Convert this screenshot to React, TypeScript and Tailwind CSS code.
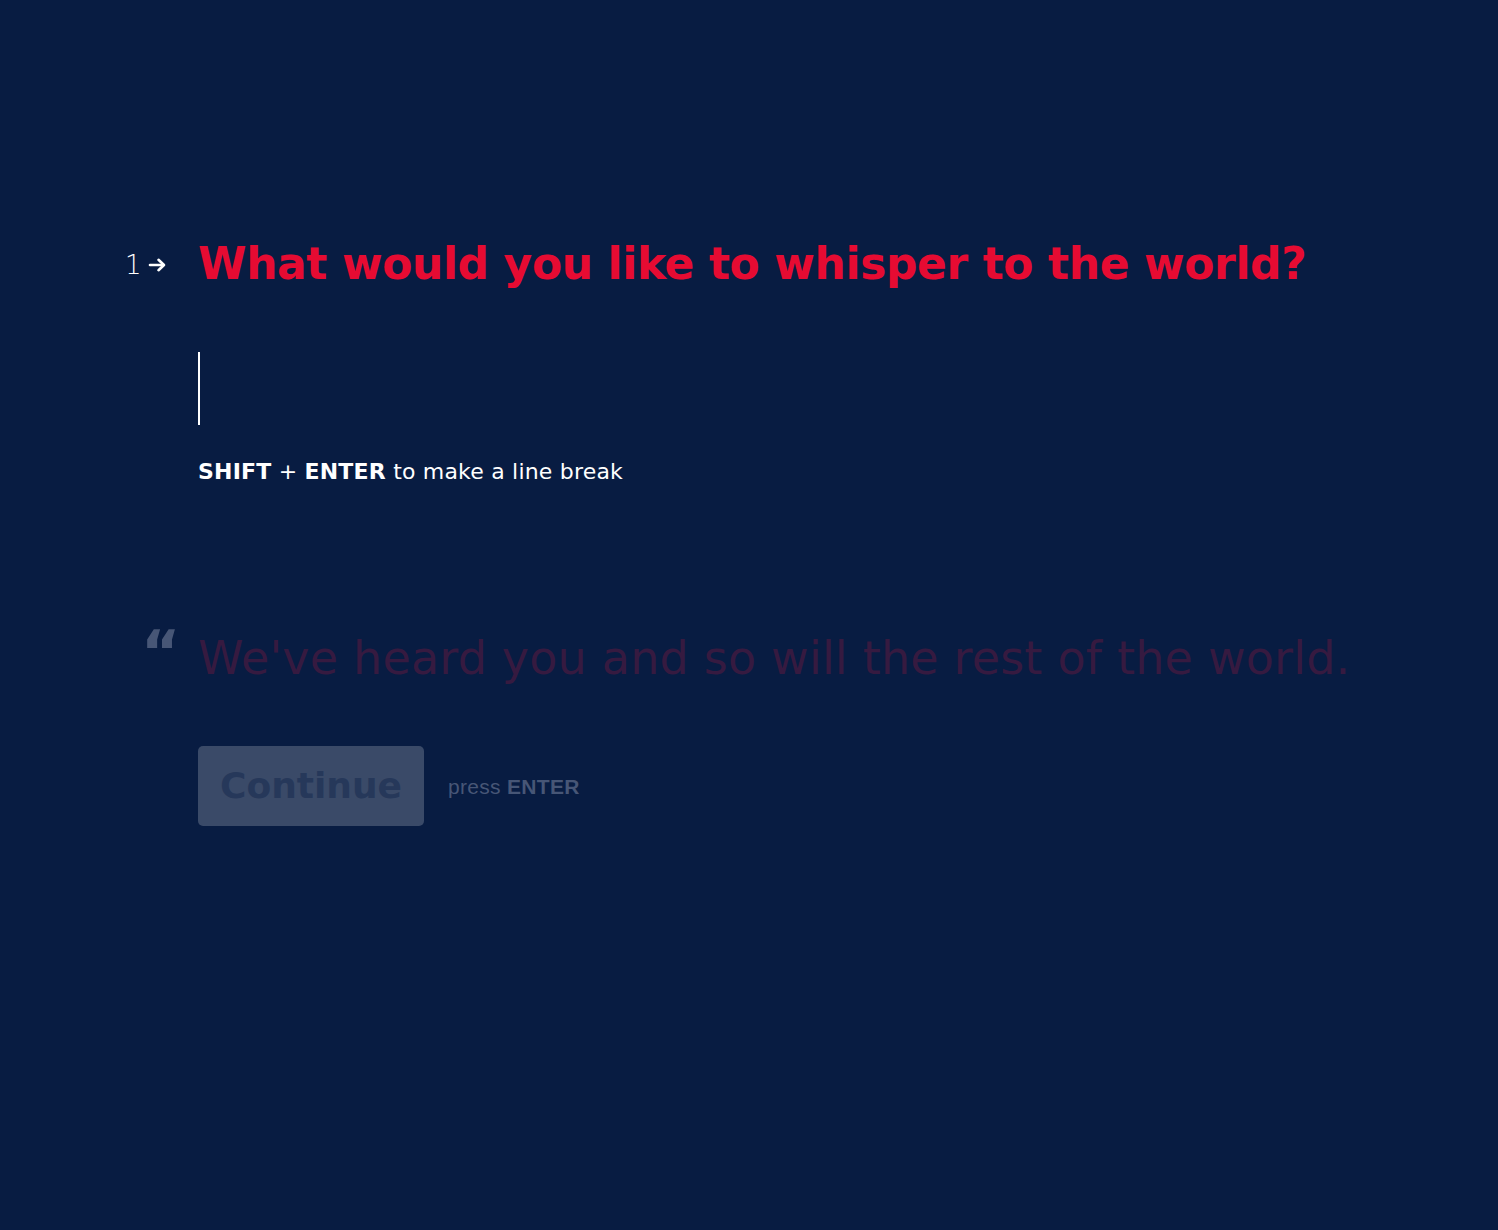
import React from "react";

const display = { fontFamily: '"DejaVu Sans", "Noto Sans", sans-serif' };

function ArrowRight() {
  return (
    <svg width="20" height="16" viewBox="0 0 20 16" fill="none" className="block">
      <path d="M2 8h13" stroke="white" strokeWidth="2.6" strokeLinecap="round" />
      <path d="M10.5 2.8L16 8l-5.5 5.2" stroke="white" strokeWidth="2.6" strokeLinecap="round" strokeLinejoin="round" />
    </svg>
  );
}

export default function App() {
  return (
    <div className="min-h-[1230px] w-full bg-[#081c42]" style={display}>
      <div className="pl-[198px] pt-[236px]">
        {/* question */}
        <div className="relative">
          <div className="absolute -left-[73px] top-[16px] flex items-center gap-[6px] text-white">
            <span className="text-[26px] font-light leading-none">1</span>
            <ArrowRight />
          </div>
          <h1 className="text-[44px] font-bold leading-[56px] tracking-[-0.4px] text-[#e60b32]">
            What would you like to whisper to the world?
          </h1>
        </div>

        {/* answer input */}
        <div className="mt-[60px] h-[73px] w-[2px] bg-white" />

        <p className="mt-[32px] text-[22px] leading-[30px] tracking-[0.2px] text-white">
          <span className="font-bold">SHIFT</span> + <span className="font-bold">ENTER</span> to make a line break
        </p>

        {/* faded statement */}
        <div className="relative mt-[141px]">
          <span className="absolute -left-[57px] -top-[6px] text-[60px] font-bold leading-none text-[#475676]">“</span>
          <p className="text-[46px] leading-[60px] tracking-[0.2px] text-[#361a40]">We've heard you and so will the rest of the world.</p>
        </div>

        <div className="mt-[58px] flex items-center gap-[24px]">
          <button className="flex h-[80px] w-[226px] items-center justify-center rounded-[5px] bg-[#3a4a68] text-[36px] font-black text-[#26385a]">
            Continue
          </button>
          <span className="pt-[2px] text-[21px] tracking-[0.3px] text-[#475676]" style={{ fontFamily: '"Liberation Sans", Arial, sans-serif' }}>
            press <span className="font-bold">ENTER</span>
          </span>
        </div>
      </div>
    </div>
  );
}
